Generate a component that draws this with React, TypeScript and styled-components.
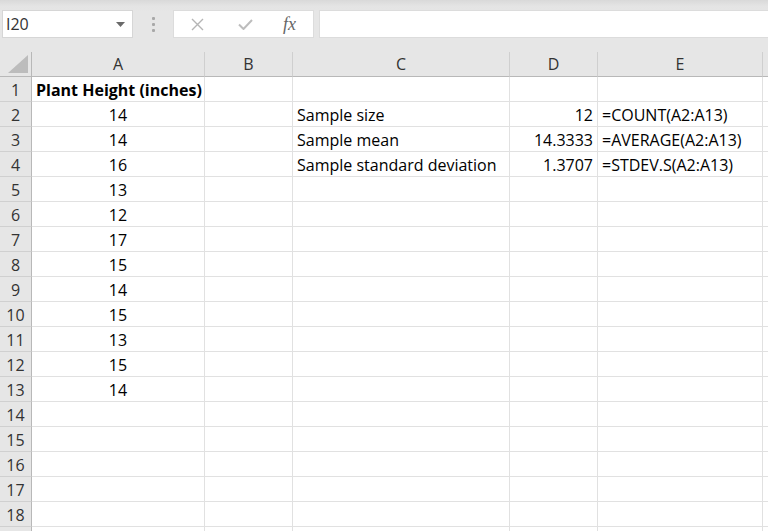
import React from "react";
import styled, { createGlobalStyle } from "styled-components";

const GlobalStyle = createGlobalStyle`
  html, body {
    margin: 0;
    padding: 0;
    background: #ffffff;
    overflow: hidden;
    font-family: "Open Sans", "Liberation Sans", sans-serif;
  }
  * { box-sizing: border-box; }
`;

const Page = styled.div`
  width: 768px;
  height: 531px;
  overflow: hidden;
  display: flex;
  flex-direction: column;
`;

const Toolbar = styled.div`
  height: 52px;
  flex: none;
  display: flex;
  align-items: flex-start;
  padding-top: 10px;
  padding-left: 2px;
  background: linear-gradient(#d9d9d9 0px, #e4e4e4 6px, #e6e6e6 12px);
`;

const NameBox = styled.div`
  width: 131px;
  height: 28px;
  background: #ffffff;
  border: 1px solid #d6d6d6;
  display: flex;
  align-items: center;
  justify-content: space-between;
  padding: 0 7px 0 3px;
  font-size: 16px;
  color: #333333;
`;

const Grip = styled.div`
  width: 40px;
  height: 28px;
  display: flex;
  flex-direction: column;
  align-items: center;
  justify-content: center;
  gap: 3px;
`;

const GripDot = styled.span`
  width: 3px;
  height: 3px;
  background: #a8a8a8;
  border-radius: 1px;
`;

const FormulaButtons = styled.div`
  width: 141px;
  height: 28px;
  background: #ffffff;
  border: 1px solid #dcdcdc;
  display: flex;
  align-items: center;
  padding-left: 17px;
`;

const IconSlot = styled.div<{ $w: number }>`
  width: ${(p) => p.$w}px;
  display: flex;
  align-items: center;
`;

const Fx = styled.span`
  font-family: "Liberation Serif", "DejaVu Serif", serif;
  font-style: italic;
  font-size: 18px;
  color: #666666;
  line-height: 1;
`;

const FormulaInput = styled.div`
  flex: 1;
  height: 28px;
  margin-left: 5px;
  background: #ffffff;
  border: 1px solid #dcdcdc;
  border-right: none;
`;

const Sheet = styled.div`
  display: grid;
  grid-template-columns: 32px 173px 88px 217px 88px 165px 1fr;
  grid-auto-rows: 25px;
  background: #ffffff;
`;

const ColHeader = styled.div<{ $corner?: boolean }>`
  background: #e6e6e6;
  border-bottom: 1px solid #b8b8b8;
  border-right: 1px solid ${(p) => (p.$corner ? "#b8b8b8" : "#cfcfcf")};
  display: flex;
  align-items: center;
  justify-content: center;
  position: relative;
  font-size: 16px;
  color: #333333;
`;

const RowHeader = styled.div`
  background: #e6e6e6;
  border-right: 1px solid #b8b8b8;
  border-bottom: 1px solid #d0d0d0;
  display: flex;
  align-items: center;
  justify-content: center;
  font-size: 16px;
  color: #333333;
  padding-top: 1px;
`;

type Align = "left" | "center" | "right";

const Cell = styled.div<{ $align?: Align; $bold?: boolean }>`
  border-right: 1px solid #e1e1e1;
  border-bottom: 1px solid #e1e1e1;
  display: flex;
  align-items: center;
  padding: 1px 4px 0 4px;
  white-space: nowrap;
  overflow: visible;
  font-size: 16px;
  color: #000000;
  font-weight: ${(p) => (p.$bold ? 700 : 400)};
  justify-content: ${(p) =>
    p.$align === "center" ? "center" : p.$align === "right" ? "flex-end" : "flex-start"};
`;

const Triangle = styled.svg`
  position: absolute;
  right: 3px;
  bottom: 3px;
`;

const heights = [14, 14, 16, 13, 12, 17, 15, 14, 15, 13, 15, 14];

const stats: Record<number, [string, string, string]> = {
  2: ["Sample size", "12", "=COUNT(A2:A13)"],
  3: ["Sample mean", "14.3333", "=AVERAGE(A2:A13)"],
  4: ["Sample standard deviation", "1.3707", "=STDEV.S(A2:A13)"],
};

export default function App() {
  const rows = Array.from({ length: 19 }, (_, i) => i + 1);
  return (
    <Page>
      <GlobalStyle />
      <Toolbar>
        <NameBox>
          <span>I20</span>
          <svg width="9" height="5" viewBox="0 0 9 5">
            <path d="M0 0 L9 0 L4.5 5 Z" fill="#6a6a6a" />
          </svg>
        </NameBox>
        <Grip>
          <GripDot />
          <GripDot />
          <GripDot />
        </Grip>
        <FormulaButtons>
          <IconSlot $w={47}>
            <svg width="13" height="13" viewBox="0 0 13 13">
              <path d="M1 1 L12 12 M12 1 L1 12" stroke="#b5b5b5" strokeWidth="1.4" fill="none" />
            </svg>
          </IconSlot>
          <IconSlot $w={45}>
            <svg width="15" height="11" viewBox="0 0 15 11">
              <path d="M1 5.5 L5.5 10 L14 1" stroke="#bdbdbd" strokeWidth="2" fill="none" />
            </svg>
          </IconSlot>
          <IconSlot $w={20}>
            <Fx>fx</Fx>
          </IconSlot>
        </FormulaButtons>
        <FormulaInput />
      </Toolbar>
      <Sheet>
        <ColHeader $corner>
          <Triangle width="20" height="18" viewBox="0 0 20 18">
            <path d="M20 0 L20 18 L0 18 Z" fill="#bcbcbc" />
          </Triangle>
        </ColHeader>
        {["A", "B", "C", "D", "E", ""].map((c, i) => (
          <ColHeader key={i}>{c}</ColHeader>
        ))}
        {rows.map((r) => {
          const s = stats[r];
          const a =
            r === 1 ? "Plant Height (inches)" : r >= 2 && r <= 13 ? String(heights[r - 2]) : "";
          return (
            <React.Fragment key={r}>
              <RowHeader>{r <= 18 ? r : ""}</RowHeader>
              <Cell $align={r === 1 ? "left" : "center"} $bold={r === 1}>
                {a}
              </Cell>
              <Cell />
              <Cell>{s ? s[0] : ""}</Cell>
              <Cell $align="right">{s ? s[1] : ""}</Cell>
              <Cell>{s ? s[2] : ""}</Cell>
              <Cell />
            </React.Fragment>
          );
        })}
      </Sheet>
    </Page>
  );
}
